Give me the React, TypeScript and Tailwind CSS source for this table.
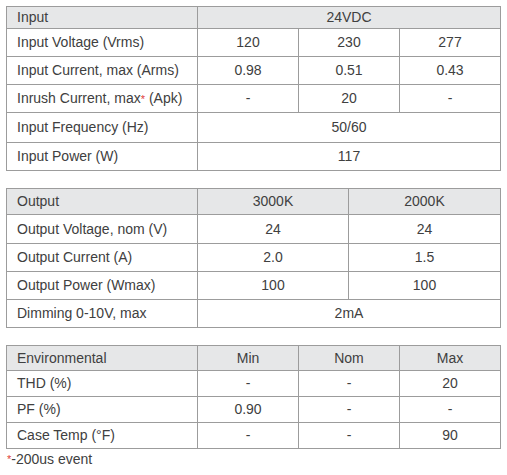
import React from 'react';

const cell = 'border border-[#9c9c9c] font-normal';
const label = `${cell} text-left pl-[10px]`;
const val = `${cell} text-center`;

function Star() {
  return <sup className="text-[#e0403a] text-[11px] relative top-[0px]">*</sup>;
}

function Cols({ widths }: { widths: number[] }) {
  return (
    <colgroup>
      {widths.map((w, i) => (
        <col key={i} style={{ width: w }} />
      ))}
    </colgroup>
  );
}

export default function App() {
  return (
    <div
      className="w-[507px] h-[475px] bg-white text-[#404040] text-[14px] pt-[6px] pl-[6px]"
      style={{ fontFamily: '"Liberation Sans", Arial, sans-serif' }}
    >
      {/* Input */}
      <table className="border-collapse w-[494px] table-fixed">
        <Cols widths={[191, 101, 101, 101]} />
        <tbody>
          <tr className="h-[21px] bg-[#e6e7e8]">
            <td className={label}>Input</td>
            <td className={val} colSpan={3}>24VDC</td>
          </tr>
          <tr className="h-[28px]">
            <td className={label}>Input Voltage (Vrms)</td>
            <td className={val}>120</td>
            <td className={val}>230</td>
            <td className={val}>277</td>
          </tr>
          <tr className="h-[28px]">
            <td className={label}>Input Current, max (Arms)</td>
            <td className={val}>0.98</td>
            <td className={val}>0.51</td>
            <td className={val}>0.43</td>
          </tr>
          <tr className="h-[28px]">
            <td className={label}>
              Inrush Current, max<Star /> (Apk)
            </td>
            <td className={val}>-</td>
            <td className={val}>20</td>
            <td className={val}>-</td>
          </tr>
          <tr className="h-[30px]">
            <td className={label}>Input Frequency (Hz)</td>
            <td className={val} colSpan={3}>50/60</td>
          </tr>
          <tr className="h-[28px]">
            <td className={label}>Input Power (W)</td>
            <td className={val} colSpan={3}>117</td>
          </tr>
        </tbody>
      </table>

      {/* Output */}
      <table className="border-collapse w-[494px] table-fixed mt-[17px]">
        <Cols widths={[191, 151, 152]} />
        <tbody>
          <tr className="h-[26px] bg-[#e6e7e8]">
            <td className={label}>Output</td>
            <td className={val}>3000K</td>
            <td className={val}>2000K</td>
          </tr>
          <tr className="h-[29px]">
            <td className={label}>Output Voltage, nom (V)</td>
            <td className={val}>24</td>
            <td className={val}>24</td>
          </tr>
          <tr className="h-[28px]">
            <td className={label}>Output Current (A)</td>
            <td className={val}>2.0</td>
            <td className={val}>1.5</td>
          </tr>
          <tr className="h-[28px]">
            <td className={label}>Output Power (Wmax)</td>
            <td className={val}>100</td>
            <td className={val}>100</td>
          </tr>
          <tr className="h-[28px]">
            <td className={label}>Dimming 0-10V, max</td>
            <td className={val} colSpan={2}>2mA</td>
          </tr>
        </tbody>
      </table>

      {/* Environmental */}
      <table className="border-collapse w-[494px] table-fixed mt-[17px]">
        <Cols widths={[191, 101, 101, 101]} />
        <tbody>
          <tr className="h-[25px] bg-[#e6e7e8]">
            <td className={label}>Environmental</td>
            <td className={val}>Min</td>
            <td className={val}>Nom</td>
            <td className={val}>Max</td>
          </tr>
          <tr className="h-[26px]">
            <td className={label}>THD (%)</td>
            <td className={val}>-</td>
            <td className={val}>-</td>
            <td className={val}>20</td>
          </tr>
          <tr className="h-[26px]">
            <td className={label}>PF (%)</td>
            <td className={val}>0.90</td>
            <td className={val}>-</td>
            <td className={val}>-</td>
          </tr>
          <tr className="h-[26px]">
            <td className={label}>Case Temp (°F)</td>
            <td className={val}>-</td>
            <td className={val}>-</td>
            <td className={val}>90</td>
          </tr>
        </tbody>
      </table>

      <p className="mt-[2px] ml-[1px] leading-[16px]">
        <span className="text-[#e0403a] text-[11px] align-top">*</span>-200us event
      </p>
    </div>
  );
}
